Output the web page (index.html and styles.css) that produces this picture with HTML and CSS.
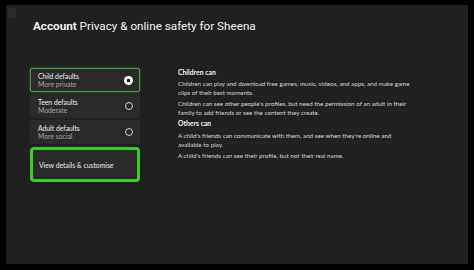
FILE: index.html
```html
<!DOCTYPE html>
<html lang="en">
<head>
    <meta charset="UTF-8">
    <meta name="viewport" content="width=device-width, initial-scale=1.0">
    <title>Account - Privacy & online safety</title>
    <link rel="stylesheet" href="styles.css">
</head>
<body>
    <div class="screen">
        <div class="corner-tab"></div>
        <h1 class="title"><b>Account</b> Privacy &amp; online safety for Sheena</h1>

        <div class="content">
            <div class="options">
                <div class="option selected">
                    <div class="option-text">
                        <div class="option-name">Child defaults</div>
                        <div class="option-sub">More private</div>
                    </div>
                    <span class="radio checked"></span>
                </div>
                <div class="option">
                    <div class="option-text">
                        <div class="option-name">Teen defaults</div>
                        <div class="option-sub">Moderate</div>
                    </div>
                    <span class="radio"></span>
                </div>
                <div class="option">
                    <div class="option-text">
                        <div class="option-name">Adult defaults</div>
                        <div class="option-sub">More social</div>
                    </div>
                    <span class="radio"></span>
                </div>
                <div class="option customise">
                    <div class="option-name">View details &amp; customise</div>
                </div>
            </div>

            <div class="details">
                <h2>Children can</h2>
                <p>Children can play and download free games, music, videos, and apps, and make game clips of their best moments.</p>
                <p>Children can see other people's profiles, but need the permission of an adult in their family to add friends or see the content they create.</p>
                <h2 class="spaced">Others can</h2>
                <p>A child's friends can communicate with them, and see when they're online and available to play.</p>
                <p>A child's friends can see their profile, but not their real name.</p>
            </div>
        </div>
    </div>
</body>
</html>
```

FILE: styles.css
```css
body {
    margin: 0;
    padding: 5px 6px 6px 6px;
    background-color: #000;
    font-family: 'Lato', 'Noto Sans', sans-serif;
    color: #e6e6e6;
    height: 270px;
    box-sizing: border-box;
    overflow: hidden;
}

.screen {
    position: relative;
    background-color: #202020;
    height: 100%;
    padding: 14px 0 0 27px;
    box-sizing: border-box;
}

.corner-tab {
    position: absolute;
    top: 3px;
    left: 2px;
    width: 8px;
    height: 10px;
    background-color: #2a2a2a;
}

.title {
    margin: 0;
    font-family: 'Roboto', sans-serif;
    font-weight: 400;
    font-size: 11.7px;
    color: #f2f2f2;
}

.title b {
    font-weight: 700;
}

.content {
    display: flex;
    margin-top: 35px;
    margin-left: -3px;
}

.options {
    width: 110px;
    display: flex;
    flex-direction: column;
    gap: 2px;
}

.option {
    display: flex;
    align-items: center;
    justify-content: space-between;
    height: 24px;
    padding: 0 7px 0 8px;
    background-color: #2a2a2a;
    border-radius: 2px;
    box-sizing: border-box;
}

.option.selected {
    border: 1px solid #3fa33a;
    box-shadow: 0 0 3px rgba(60, 170, 50, 0.6);
    padding: 0 6px 0 7px;
}

.option.customise {
    height: 35px;
    margin-top: 1px;
    border: 3px solid #2fd41e;
    border-radius: 4px;
    padding: 0 6px;
}

.option-name {
    font-size: 6.8px;
    color: #ececec;
    line-height: 8px;
}

.option-sub {
    font-size: 6.8px;
    color: #a5a5a5;
    line-height: 8px;
}

.radio {
    width: 8px;
    height: 8px;
    border: 1px solid #d0d0d0;
    border-radius: 50%;
    box-sizing: border-box;
}

.radio.checked {
    width: 9px;
    height: 9px;
    border: none;
    background: radial-gradient(circle, #1a1a1a 0 1.6px, #ffffff 2.1px);
}

.details {
    width: 234px;
    margin-left: 38px;
}

.details h2 {
    margin: 0 0 3px 0;
    font-size: 6.8px;
    font-weight: 700;
    color: #f5f5f5;
    line-height: 8px;
}

.details h2.spaced {
    margin-bottom: 4px;
}

.details p {
    margin: 0 0 2px 0;
    font-size: 6.25px;
    line-height: 9px;
    color: #d6d6d6;
}
```
